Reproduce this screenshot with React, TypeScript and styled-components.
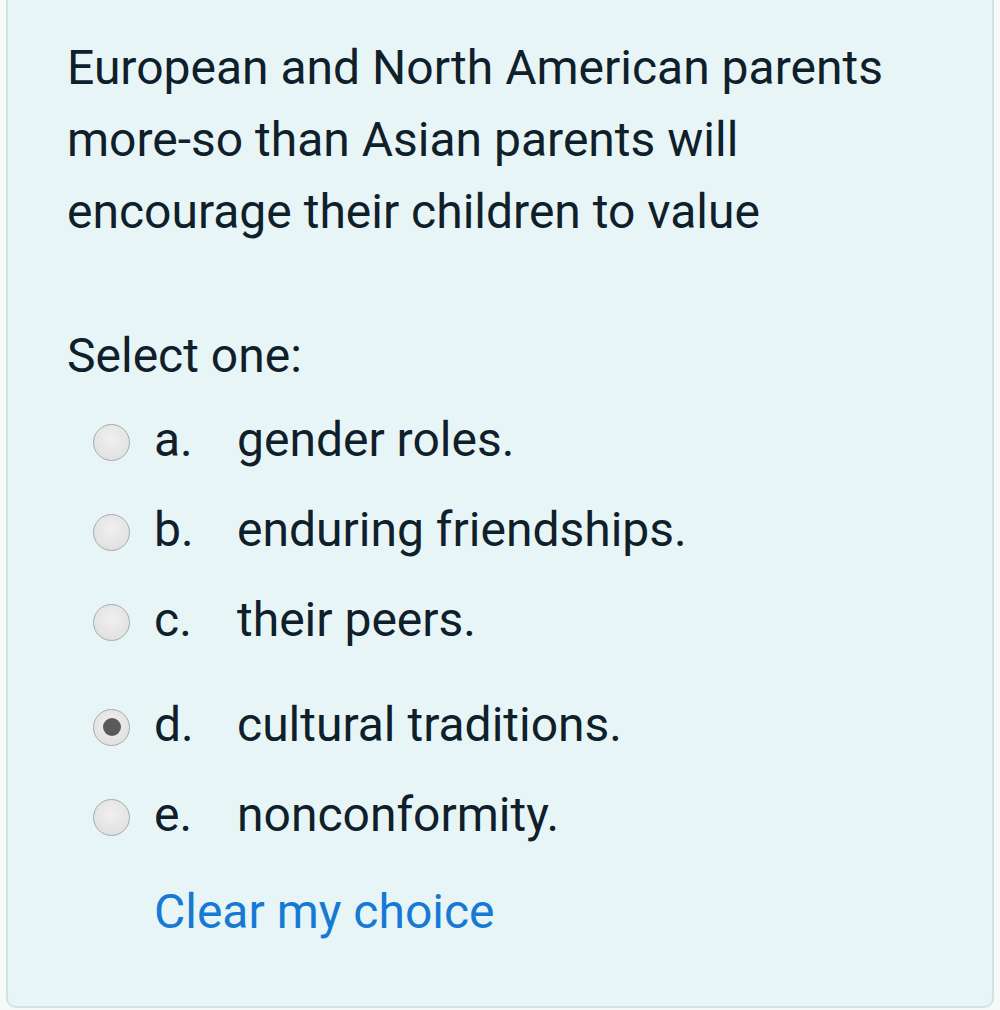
import React from 'react';
import styled, {createGlobalStyle} from 'styled-components';

const GlobalStyle = createGlobalStyle`
  html, body {
    margin: 0;
    padding: 0;
    background: #f8f9f9;
  }
  body {
    font-family: Roboto, "Liberation Sans", sans-serif;
    color: #10202a;
  }
`

const Card = styled.div`
  box-sizing: border-box;
  margin: 0 6px;
  height: 1008px;
  padding: 32px 30px 0 59px;
  background: #e7f5f7;
  border: 2px solid #cfe4e8;
  border-top: none;
  border-radius: 0 0 10px 10px;
  font-size: 48px;
  line-height: 72px;
`

const Question = styled.div`
  margin-bottom: 72px;
`

const Prompt = styled.div`
  margin-bottom: 3px;
`

const Options = styled.div`
  display: flex;
  flex-direction: column;
  padding-left: 26px;
`

const Option = styled.label<{$extra?: number}>`
  display: flex;
  align-items: center;
  height: 90px;
  margin-top: ${p => p.$extra || 0}px;
`

const Radio = styled.span<{$checked?: boolean}>`
  box-sizing: border-box;
  flex: none;
  width: 37px;
  height: 37px;
  border-radius: 50%;
  border: 1.5px solid #a9abab;
  background: radial-gradient(circle at 50% 40%, #f0f0f0 0%, #e2e2e2 70%, #d8d8d8 100%);
  display: flex;
  align-items: center;
  justify-content: center;
  margin-top: 4px;

  &::after {
    content: '';
    display: ${p => (p.$checked ? 'block' : 'none')};
    width: 18px;
    height: 18px;
    border-radius: 50%;
    background: #5a5a5a;
  }
`

const Letter = styled.span`
  width: 83px;
  margin-left: 24px;
  flex: none;
`

const Answer = styled.span``

const ClearLink = styled.a`
  display: block;
  margin: 16px 0 0 87px;
  color: #1679d4;
  text-decoration: none;
`

const options = [
  {letter: 'a.', text: 'gender roles.'},
  {letter: 'b.', text: 'enduring friendships.'},
  {letter: 'c.', text: 'their peers.'},
  {letter: 'd.', text: 'cultural traditions.', checked: true, extra: 15},
  {letter: 'e.', text: 'nonconformity.'},
];

function App() {
  return (
    <>
      <GlobalStyle/>
      <Card>
        <Question>
          European and North American parents<br/>
          more-so than Asian parents will<br/>
          encourage their children to value
        </Question>
        <Prompt>Select one:</Prompt>
        <Options>
          {options.map(o => (
            <Option key={o.letter} $extra={o.extra}>
              <Radio $checked={o.checked}/>
              <Letter>{o.letter}</Letter>
              <Answer>{o.text}</Answer>
            </Option>
          ))}
        </Options>
        <ClearLink href="#">Clear my choice</ClearLink>
      </Card>
    </>
  );
}

export default App;
